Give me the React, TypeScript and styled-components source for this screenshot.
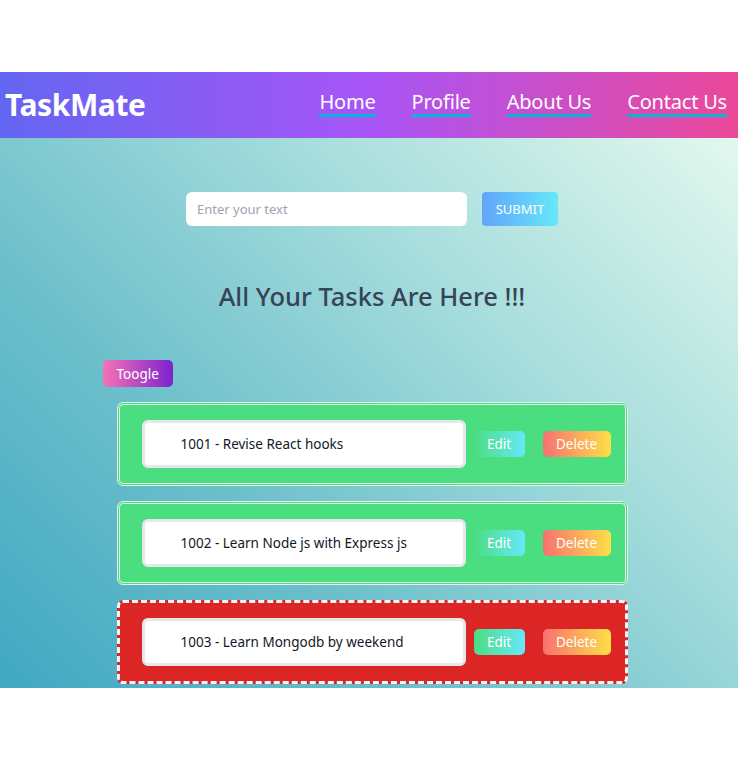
import React from "react";
import styled, { createGlobalStyle } from "styled-components";

const Global = createGlobalStyle`
  html, body { margin: 0; padding: 0; background: #ffffff; }
  body { font-family: "Noto Sans", "Open Sans", Arial, sans-serif; }
  * { box-sizing: border-box; }
`;

const Page = styled.div`
  padding-top: 72px;
  padding-bottom: 73px;
`;

const Header = styled.header`
  height: 66px;
  display: flex;
  align-items: center;
  justify-content: space-between;
  padding: 0 11px 0 5px;
  background: linear-gradient(to right, #6366f1, #a855f7, #ec4899);
`;

const Logo = styled.h1`
  margin: 0 0 2px;
  color: #ffffff;
  font-size: 30px;
  font-weight: 700;
  letter-spacing: -0.4px;
`;

const Nav = styled.nav`
  display: flex;
  gap: 36px;
  align-items: center;
  margin-bottom: 4px;
`;

const NavLink = styled.a`
  color: #ffffff;
  font-size: 20px;
  text-decoration: none;
  border-bottom: 3px solid #06b6d4;
  line-height: 25px;
  letter-spacing: -0.2px;
`;

const Main = styled.main`
  height: 550px;
  overflow: hidden;
  background: linear-gradient(
    45deg,
    #40a8c2 0%,
    #6cbfcb 33%,
    #a8dedd 67%,
    #e3f8ee 100%
  );
  padding-top: 54px;
  display: flex;
  flex-direction: column;
  align-items: center;
`;

const Form = styled.form`
  display: flex;
  gap: 15px;
  margin-left: 6px;
`;

const TextInput = styled.input`
  width: 281px;
  height: 34px;
  border: none;
  border-radius: 6px;
  background: #ffffff;
  padding: 0 11px;
  font-family: inherit;
  font-size: 13px;
  color: #111827;
  outline: none;
  &::placeholder { color: #9ca3af; }
`;

const SubmitButton = styled.button`
  width: 76px;
  height: 34px;
  border: none;
  border-radius: 4px;
  background: linear-gradient(to right, #60a5fa, #67e8f9);
  color: #ffffff;
  font-family: inherit;
  font-size: 13px;
`;

const Heading = styled.h2`
  margin: 54px 0 0 6px;
  color: #374357;
  font-size: 25.5px;
  font-weight: 500;
  line-height: 32px;
`;

const ListSection = styled.section`
  width: 539px;
  margin: 48px 0 0 6px;
  display: flex;
  flex-direction: column;
`;

const ToggleButton = styled.button`
  align-self: flex-start;
  height: 27px;
  padding: 0 14px;
  border: none;
  border-radius: 5px;
  background: linear-gradient(to right, #f472b6, #7e22ce);
  color: #ffffff;
  font-family: inherit;
  font-size: 13.5px;
`;

const Cards = styled.div`
  display: flex;
  flex-direction: column;
  gap: 15px;
  margin-top: 15px;
  padding: 0 14px;
`;

const Card = styled.div<{ $done: boolean }>`
  height: 84px;
  display: flex;
  align-items: center;
  padding: 0 14px 0 22px;
  border-radius: 6px;
  background: ${(p) => (p.$done ? "#4ade80" : "#dc2626")};
  border: 3px ${(p) => (p.$done ? "double" : "dashed")}
    ${(p) => (p.$done ? "#e5f5ea" : "#f3f4f6")};
`;

const TaskBox = styled.div`
  width: 324px;
  height: 48px;
  display: flex;
  align-items: center;
  padding-left: 36px;
  background: #ffffff;
  border: 3px solid #e5e7eb;
  border-radius: 6px;
  color: #111827;
  font-size: 13.5px;
`;

const EditButton = styled.button`
  width: 51px;
  height: 26px;
  margin-left: 8px;
  border: none;
  border-radius: 5px;
  background: linear-gradient(to right, #4ade80, #67e8f9);
  color: #ffffff;
  font-family: inherit;
  font-size: 13.5px;
`;

const DeleteButton = styled.button`
  width: 68px;
  height: 26px;
  margin-left: 18px;
  border: none;
  border-radius: 5px;
  background: linear-gradient(to right, #f87171, #fde047);
  color: #ffffff;
  font-family: inherit;
  font-size: 13.5px;
`;

const tasks = [
  { id: 1001, text: "Revise React hooks", done: true },
  { id: 1002, text: "Learn Node js with Express js", done: true },
  { id: 1003, text: "Learn Mongodb by weekend", done: false },
];

export default function App() {
  return (
    <Page>
      <Global />
      <Header>
        <Logo>TaskMate</Logo>
        <Nav>
          <NavLink href="#">Home</NavLink>
          <NavLink href="#">Profile</NavLink>
          <NavLink href="#">About Us</NavLink>
          <NavLink href="#">Contact Us</NavLink>
        </Nav>
      </Header>
      <Main>
        <Form onSubmit={(e) => e.preventDefault()}>
          <TextInput placeholder="Enter your text" />
          <SubmitButton type="submit">SUBMIT</SubmitButton>
        </Form>
        <Heading>All Your Tasks Are Here !!!</Heading>
        <ListSection>
          <ToggleButton>Toogle</ToggleButton>
          <Cards>
            {tasks.map((t) => (
              <Card key={t.id} $done={t.done}>
                <TaskBox>
                  {t.id} - {t.text}
                </TaskBox>
                <EditButton>Edit</EditButton>
                <DeleteButton>Delete</DeleteButton>
              </Card>
            ))}
          </Cards>
        </ListSection>
      </Main>
    </Page>
  );
}
